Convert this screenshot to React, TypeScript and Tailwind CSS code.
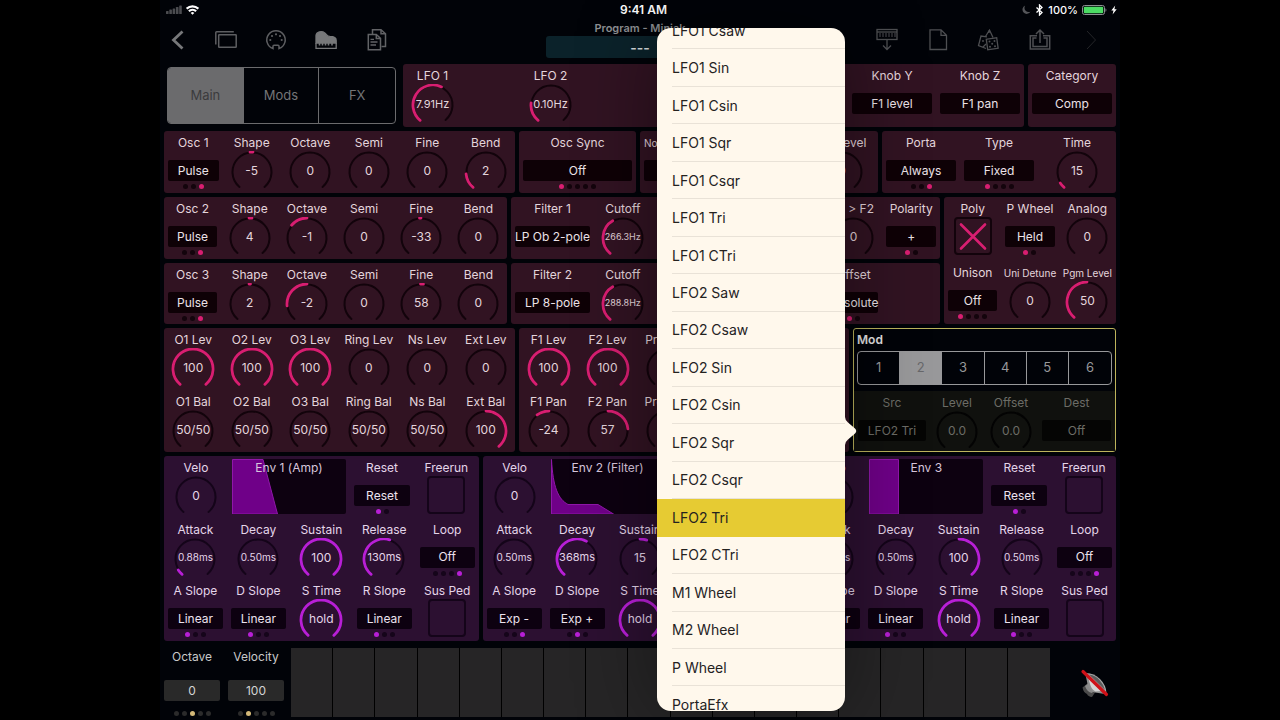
import { useState } from 'react';
import type { ReactNode } from 'react';

type Tone = 'pink' | 'purple' | 'dim' | 'keys';

const ARC: Record<Tone, string> = {
  pink: 'stroke-[#d81e71]',
  purple: 'stroke-[#b81fd6]',
  dim: 'stroke-[#6b6b3a]',
  keys: 'stroke-[#c9b27c]',
};

const TRACK: Record<Tone, string> = {
  pink: 'stroke-[#12030b]',
  purple: 'stroke-[#140419]',
  dim: 'stroke-[#030303]',
  keys: 'stroke-black',
};

const BUTTON: Record<Tone, string> = {
  pink: 'bg-[#0e0106] text-[#ece2e7]',
  purple: 'bg-[#0d0110] text-[#ece2ee]',
  dim: 'bg-[#050504] text-[#6c6c66]',
  keys: 'bg-[#292929] text-[#d4d4d4]',
};

const TEXT: Record<Tone, string> = {
  pink: 'text-[#e4d5dc]',
  purple: 'text-[#e4d5e9]',
  dim: 'text-[#6c6c66]',
  keys: 'text-[#c4c4c4]',
};

const DOT_ON: Record<Tone, string> = {
  pink: 'bg-[#d81e71]',
  purple: 'bg-[#b81fd6]',
  dim: 'bg-transparent',
  keys: 'bg-[#d3b878]',
};

const DOT_OFF: Record<Tone, string> = {
  pink: 'bg-[#13040c]',
  purple: 'bg-[#15051a]',
  dim: 'bg-transparent',
  keys: 'bg-[#2b2b2b]',
};

const VALUE_SIZE = {
  xs: 'text-[9px]',
  sm: 'text-[10px]',
  md: 'text-[11px]',
  lg: 'text-xs',
};

// The dial sweeps 280 degrees, with the gap at the bottom
function arcPath(from: number, to: number, r: number) {
  const point = (v: number) => {
    const a = ((v * 280 - 140) * Math.PI) / 180;
    return `${(22 + r * Math.sin(a)).toFixed(2)} ${(21 - r * Math.cos(a)).toFixed(2)}`;
  };
  const large = (to - from) * 280 > 180 ? 1 : 0;
  return `M${point(from)}A${r} ${r} 0 ${large} 1 ${point(to)}`;
}

type KnobProps = {
  label: string;
  value: string;
  tone?: Tone;
  from?: number;
  to?: number;
  smallLabel?: boolean;
  size?: keyof typeof VALUE_SIZE;
};

function Knob({ label, value, tone = 'pink', from = 0, to = 0, smallLabel, size = 'lg' }: KnobProps) {
  return (
    <label className={`flex flex-col items-center pt-1 ${TEXT[tone]}`}>
      <span className={`h-4 leading-4 whitespace-nowrap ${smallLabel ? 'text-[10px]' : 'text-xs'}`}>{label}</span>
      <span className="relative flex h-10 w-11 items-center justify-center">
        <svg viewBox="0 0 44 40" className="absolute inset-0 h-10 w-11" fill="none" strokeLinecap="round">
          <path d={arcPath(0, 1, 19.5)} className={TRACK[tone]} strokeWidth="2" />
          {to > from && <path d={arcPath(from, to, 20)} className={ARC[tone]} strokeWidth="2.8" />}
        </svg>
        <span className={`relative whitespace-nowrap ${VALUE_SIZE[size]}`}>{value}</span>
        <input type="range" min={0} max={100} defaultValue={to * 100} className="absolute inset-0 h-10 w-11 opacity-0" />
      </span>
    </label>
  );
}

type PickerProps = {
  label: string;
  value: string;
  tone?: Tone;
  dots?: number;
  active?: number;
  smallLabel?: boolean;
};

function Picker({ label, value, tone = 'pink', dots = 0, active = 0, smallLabel }: PickerProps) {
  return (
    <div className={`flex flex-col px-1 pt-1 ${TEXT[tone]}`}>
      <span className={`h-4 text-center leading-4 whitespace-nowrap ${smallLabel ? 'text-[10px]' : 'text-xs'}`}>{label}</span>
      <button
        type="button"
        aria-label={label}
        className={`mt-[9px] flex h-[21px] items-center justify-center rounded-xs text-xs whitespace-nowrap ${BUTTON[tone]}`}
      >
        {value}
      </button>
      <Dots count={dots} active={active} tone={tone} />
    </div>
  );
}

function Dots({ count, active, tone }: { count: number; active: number; tone: Tone }) {
  return (
    <div className="mt-[3px] flex h-[5px] justify-center gap-[3px]">
      {Array.from({ length: count }, (_, i) => (
        <span key={i} className={`size-[5px] rounded-full ${i === active ? DOT_ON[tone] : DOT_OFF[tone]}`} />
      ))}
    </div>
  );
}

function Toggle({ label, tone = 'pink', checked = false }: { label: string; tone?: Tone; checked?: boolean }) {
  const [on, setOn] = useState(checked);
  return (
    <label className={`flex flex-col items-center pt-1 ${TEXT[tone]}`}>
      <span className="h-4 text-xs leading-4 whitespace-nowrap">{label}</span>
      <span className="relative size-[38px]">
        <input
          type="checkbox"
          checked={on}
          onChange={() => setOn(!on)}
          className={`block size-[38px] appearance-none rounded-sm border-2 ${tone === 'purple' ? 'border-[#140419]' : 'border-[#12030b]'}`}
        />
        {on && (
          <svg viewBox="0 0 38 38" className="pointer-events-none absolute inset-0 size-[38px]">
            <path d="M7 7.500 31 31.500M31 7.500 7 31.500" className={ARC[tone]} strokeWidth="2.6" strokeLinecap="round" />
          </svg>
        )}
      </span>
    </label>
  );
}

function Panel({ className = '', children }: { className?: string; children: ReactNode }) {
  return <section className={`rounded-[3px] ${className}`}>{children}</section>;
}

const PINK = 'bg-[#311322]';
const PURPLE = 'bg-[#2c1031]';

const SIX = 'grid grid-cols-6';

function StatusBar() {
  return (
    <div className="flex h-5 items-center text-white">
      <div className="flex flex-1 items-center gap-1 pl-[6px]">
        <svg width="16" height="10" viewBox="0 0 16 10" fill="#4b4c50">
          <rect x="0" y="6" width="2.600" height="3" rx=".6" />
          <rect x="3.300" y="4.500" width="2.600" height="4.500" rx=".6" />
          <rect x="6.600" y="3.500" width="2.600" height="5.500" rx=".6" />
          <rect x="9.900" y="2" width="2.600" height="7" rx=".6" />
          <rect x="13.200" y="0.500" width="2.600" height="8.500" rx=".6" />
        </svg>
        <svg width="13" height="10" viewBox="0 0 13 10" fill="none" stroke="white" strokeWidth="2.200">
          <path d="M.6 3.700a8.400 8.400 0 0 1 11.800 0" />
          <path d="M2.900 6.300a5.100 5.100 0 0 1 7.200 0" />
          <path d="M6.500 9.700 4.700 7.900a2.500 2.500 0 0 1 3.600 0z" fill="white" stroke="none" />
        </svg>
      </div>
      <span className="pl-1 text-xs font-semibold">9:41 AM</span>
      <div className="flex flex-1 items-center justify-end gap-1 pr-[3px]">
        <svg width="9" height="10" viewBox="0 0 9 10" fill="#55565a">
          <path d="M3.200.6a4.300 4.300 0 1 0 5.400 6A4.200 4.200 0 0 1 3.200.6z" />
        </svg>
        <svg width="9" height="12" viewBox="0 0 9 12" fill="none" stroke="white" strokeWidth="1.300">
          <path d="M1.500 3.500 7 8.500 4.500 11V1L7 3.500l-5.500 5" />
        </svg>
        <span className="text-[11px] font-medium">100%</span>
        <svg width="25" height="10" viewBox="0 0 25 10">
          <rect x=".5" y=".5" width="22" height="9" rx="2" fill="none" stroke="#8d8f92" />
          <rect x="1.800" y="1.800" width="19.400" height="6.400" rx="1" fill="#4cdc64" />
          <path d="M23.500 3.200c1.200.4 1.200 3.200 0 3.600z" fill="#8d8f92" />
        </svg>
        <svg width="6" height="10" viewBox="0 0 6 10" fill="white">
          <path d="M4.200.5.3 5.500h2.200L1.600 9.500 5.700 4.300H3.400z" />
        </svg>
      </div>
    </div>
  );
}

function IconButton({ label, className, children }: { label: string; className: string; children: ReactNode }) {
  return (
    <button type="button" aria-label={label} className={`flex h-[39px] items-center justify-center ${className}`}>
      <svg width="26" height="26" viewBox="0 0 26 26" fill="none" stroke="currentColor" strokeWidth="1.300">
        {children}
      </svg>
    </button>
  );
}

function Toolbar() {
  return (
    <div className="flex h-11 justify-between">
      <div className="flex text-[#77787a]">
        <IconButton label="Back" className="mr-[5px] w-9">
          <path d="M17.500 4.500 8.500 13l9 8.500" strokeWidth="2.800" />
        </IconButton>
        <IconButton label="Windows" className="w-[50px] text-[#5d5e61]">
          <path d="M2.800 17.500V5.500q0-.8.800-.8h17.200" strokeWidth="1.500" />
          <rect x="5.700" y="7.700" width="17.500" height="12.600" rx=".6" strokeWidth="1.500" />
        </IconButton>
        <IconButton label="MIDI" className="w-[50px] text-[#5d5e61]">
          <path d="M10 21.600a9.200 9.200 0 1 1 6 0v-2.400q0-1-1-1h-4q-1 0-1 1z" strokeWidth="1.500" />
          <g fill="currentColor" stroke="none">
            <circle cx="7.300" cy="13" r="1.100" />
            <circle cx="9" cy="9" r="1.100" />
            <circle cx="13" cy="7.300" r="1.100" />
            <circle cx="17" cy="9" r="1.100" />
            <circle cx="18.700" cy="13" r="1.100" />
          </g>
        </IconButton>
        <IconButton label="Piano" className="w-[50px]">
          <path d="M3 16V8.500c.4-3.500 5.500-5.200 8.800-2.600 2.300 2 2.200 3.300 5 3.500 3.600 0 6.400.4 6.400 4V16z" fill="currentColor" />
          <path d="M3 16v5.300h20.200V16" />
          <path d="M6.500 16v2.500M9.500 16v2.500M12.500 16v2.500M15.500 16v2.500M19 16v2.500" strokeWidth="1.600" />
        </IconButton>
        <IconButton label="Copy" className="w-[50px] text-[#626366]">
          <path d="M9.500 7V2.800H18l4.500 4v12.700h-4M18 2.800v4h4.500" strokeWidth="1.500" />
          <path d="M5.300 7.500h8l4.200 3.800v11.400H5.300zM13.300 7.500v4h4.200" strokeWidth="1.500" />
          <path d="M7.500 12.300h3.500M7.500 15h7M7.500 18h5.500" />
        </IconButton>
      </div>
      <div className="absolute inset-x-0 flex flex-col items-center">
        <label htmlFor="program" className="h-4 text-[11px] leading-4 font-semibold text-[#8d8f92]">
          Program - Miniak
        </label>
        <input
          id="program"
          readOnly
          value="---"
          className="h-[22px] w-[188px] rounded-[3px] bg-[#0b222a] text-center text-sm font-semibold text-[#d5dcde]"
        />
      </div>
      <div className="relative flex pr-1 text-[#4e4f52]">
        <IconButton label="Keyboard down" className="w-[51px]">
          <rect x="3" y="2.500" width="20" height="10" />
          <path d="M3 5h20" />
          <path d="M6 6v4M9 6v4M12 6v4M15 6v4M18 6v4M21 6v4" strokeWidth="1" />
          <path d="M13 12.500v10M9 18.500l4 4 4-4" />
        </IconButton>
        <IconButton label="New" className="w-[51px]">
          <path d="M5 2.800h11l5.500 5.500v14.200H5zM16 2.800v5.500h5.500" />
        </IconButton>
        <IconButton label="Randomize" className="w-[51px]">
          <rect x="11" y="11.500" width="10.500" height="10.500" transform="rotate(-8 16 17)" />
          <path d="M11 9.800 5 9 2.500 18.500l7.500 3M9.500 9.500 13.500 3l3.500 7.500M7 20l3-3M13 3v3" />
          <g fill="currentColor" stroke="none">
            <circle cx="13.500" cy="14.500" r="1" />
            <circle cx="18.500" cy="14" r="1" />
            <circle cx="16.200" cy="16.800" r="1" />
            <circle cx="14" cy="19.800" r="1" />
            <circle cx="19" cy="19.200" r="1" />
            <circle cx="7" cy="14" r=".9" />
          </g>
        </IconButton>
        <IconButton label="Share" className="w-[51px]">
          <path d="M10 8.800H3.300V22h19.400V8.800H16" strokeWidth="1.500" />
          <path d="M9.500 11H6v8.500h14V11h-3.500M13 16V3M9 7l4-4 4 4" strokeWidth="1.500" />
        </IconButton>
        <IconButton label="Next" className="w-[51px] text-[#242528]">
          <path d="m9 4 8.500 9L9 22" strokeWidth="1" />
        </IconButton>
      </div>
    </div>
  );
}

function PageTabs() {
  const [tab, setTab] = useState('Main');
  return (
    <div className="m-[3px] grid w-[229px] grid-cols-3 divide-x divide-[#6b6b6d] overflow-hidden rounded-sm border border-[#6b6b6d] text-[13px] text-[#747577]">
      {['Main', 'Mods', 'FX'].map((name) => (
        <button
          key={name}
          type="button"
          onClick={() => setTab(name)}
          className={name === tab ? 'bg-[#6b6b6d] text-[#3b3b3d]' : ''}
        >
          {name}
        </button>
      ))}
    </div>
  );
}

function Oscillator({ index, knobs }: { index: number; knobs: KnobProps[] }) {
  return (
    <Panel className={`${PINK} ${SIX} flex-none`}>
      <Picker label={`Osc ${index}`} value="Pulse" dots={3} active={2} />
      {knobs.map((knob) => (
        <Knob key={knob.label} {...knob} />
      ))}
    </Panel>
  );
}

function Mod() {
  const [slot, setSlot] = useState(2);
  return (
    <Panel className="flex flex-col border border-[#bdb45c] bg-[#010308]">
      <h2 className="h-[22px] pl-[3px] text-xs leading-[22px] font-semibold text-[#e4e4e4]">Mod</h2>
      <div className="mx-[3px] grid h-[34px] grid-cols-6 divide-x divide-[#98989a] overflow-hidden rounded-sm border border-[#98989a] text-[13px] text-[#98989a]">
        {[1, 2, 3, 4, 5, 6].map((n) => (
          <button
            key={n}
            type="button"
            onClick={() => setSlot(n)}
            className={n === slot ? 'bg-[#98989a] text-[#67676a]' : ''}
          >
            {n}
          </button>
        ))}
      </div>
      <div className="mt-[6px] grid flex-1 grid-cols-[76px_54px_54px_1fr] bg-[#10110e]">
        <Picker label="Src" value="LFO2 Tri" tone="dim" />
        <Knob label="Level" value="0.0" tone="dim" />
        <Knob label="Offset" value="0.0" tone="dim" />
        <Picker label="Dest" value="Off" tone="dim" />
      </div>
    </Panel>
  );
}

type EnvelopeProps = {
  title: string;
  shape: string;
  attack: KnobProps;
  decay: KnobProps;
  sustain: KnobProps;
  release: KnobProps;
  aSlope: [string, number];
  dSlope: [string, number];
};

function Envelope({ title, shape, attack, decay, sustain, release, aSlope, dSlope }: EnvelopeProps) {
  return (
    <Panel className={`${PURPLE} grid grid-rows-3`}>
      <div className="grid grid-cols-[64px_122px_64px_1fr]">
        <Knob label="Velo" value="0" tone="purple" />
        <div className="relative mx-1 mt-[3px] h-[55px] rounded-xs bg-[#0d0110]">
          <svg viewBox="0 0 114 55" preserveAspectRatio="none" className="absolute inset-0 h-full w-full">
            <path d={shape} fill="#6f0088" stroke="#8f17a8" />
          </svg>
          <h2 className="relative pt-[1px] text-center text-xs leading-4 text-[#d8c6dd]">{title}</h2>
        </div>
        <Picker label="Reset" value="Reset" tone="purple" dots={2} active={0} />
        <Toggle label="Freerun" tone="purple" />
      </div>
      <div className="grid grid-cols-5">
        <Knob {...attack} tone="purple" />
        <Knob {...decay} tone="purple" />
        <Knob {...sustain} tone="purple" />
        <Knob {...release} tone="purple" />
        <Picker label="Loop" value="Off" tone="purple" dots={4} active={3} />
      </div>
      <div className="grid grid-cols-5">
        <Picker label="A Slope" value={aSlope[0]} tone="purple" dots={3} active={aSlope[1]} />
        <Picker label="D Slope" value={dSlope[0]} tone="purple" dots={3} active={dSlope[1]} />
        <Knob label="S Time" value="hold" tone="purple" to={1} />
        <Picker label="R Slope" value="Linear" tone="purple" dots={3} active={0} />
        <Toggle label="Sus Ped" tone="purple" />
      </div>
    </Panel>
  );
}

function Keyboard() {
  return (
    <div className="flex h-[79px] px-1 pt-1">
      <div className="w-[56px]">
        <KeyPicker label="Octave" value="0" active={2} />
      </div>
      <div className="mr-[7px] ml-2 w-[56px]">
        <KeyPicker label="Velocity" value="100" active={1} />
      </div>
      <div className="mt-[3px] mb-[3px] grid flex-1 grid-cols-18 divide-x divide-black bg-[#262526]">
        {Array.from({ length: 18 }, (_, i) => (
          <button key={i} type="button" aria-label={`Key ${i + 1}`} />
        ))}
      </div>
      <button type="button" aria-label="Mute" className="flex w-[66px] items-center justify-end pr-[6px]">
        <svg width="32" height="32" viewBox="0 0 32 32">
          <path d="M4.500 20.500 10 16l8 8-4 6q-4-.5-5-3-3.500-1.500-4.500-6.500z" fill="#4a4a4a" />
          <path d="m7 19 4-3 6 6-3 4q-5-1-7-7z" fill="#8a8a8a" />
          <path d="M9.500 17 7.500 7.500 27 27l-10-1.500q-6-2-7.500-8.500z" fill="#8f8f8f" />
          <path d="m12 17-2-7 13.500 14-6 .5q-4-2-5.500-7.500z" fill="#d6d6d6" />
          <path d="M8 6q8 0 14 6t6.500 14z" fill="#a9a9a9" />
          <path d="M11 7.500q6 .5 10.500 5.500t5.500 10z" fill="#5d5d5d" />
          <path d="M5 4.500 28.500 27.500" stroke="#cf1118" strokeWidth="3.200" strokeLinecap="round" />
        </svg>
      </button>
    </div>
  );
}

function KeyPicker({ label, value, active }: { label: string; value: string; active: number }) {
  return (
    <div className="flex flex-col pt-1 text-xs text-[#c8c8c8]">
      <span className="h-4 text-center leading-4">{label}</span>
      <button type="button" aria-label={label} className="mt-[15px] h-[21px] rounded-xs bg-[#292929] text-[#d4d4d4]">
        {value}
      </button>
      <div className="mt-[7px]">
        <Dots count={5} active={active} tone="keys" />
      </div>
    </div>
  );
}

const SOURCES = [
  'LFO1 Csaw', 'LFO1 Sin', 'LFO1 Csin', 'LFO1 Sqr', 'LFO1 Csqr', 'LFO1 Tri', 'LFO1 CTri',
  'LFO2 Saw', 'LFO2 Csaw', 'LFO2 Sin', 'LFO2 Csin', 'LFO2 Sqr', 'LFO2 Csqr', 'LFO2 Tri', 'LFO2 CTri',
  'M1 Wheel', 'M2 Wheel', 'P Wheel', 'PortaEfx',
];

function SourceMenu() {
  const [source, setSource] = useState('LFO2 Tri');
  return (
    <div className="absolute top-7 left-[497px] w-[188px]">
      <div className="h-[683px] overflow-hidden rounded-[14px] bg-[#fff8ec] shadow-[0_0_80px_rgba(0,0,0,0.4)]">
        <ul className="-mt-4 flex h-[712px] flex-col text-sm text-[#24221f]">
          {SOURCES.map((name) => (
            <li key={name} className={`flex flex-1 pl-[15px] ${name === source ? 'bg-[#e6cb33]' : ''}`}>
              <button
                type="button"
                onClick={() => setSource(name)}
                className={`flex-1 border-b pt-px text-left ${name === source ? 'border-[#e6cb33]' : 'border-[#e9e2d7]'}`}
              >
                {name}
              </button>
            </li>
          ))}
        </ul>
      </div>
      <svg width="12" height="32" viewBox="0 0 12 32" className="absolute top-[387px] left-full" fill="#fff8ec">
        <path d="M0 2q0 3 3 5.500l7 6q2.500 2.500 0 5l-7 6Q0 27 0 30z" />
      </svg>
    </div>
  );
}

export default function App() {
  return (
    <div className="min-h-screen bg-black font-['Inter','Liberation_Sans',sans-serif]">
      <main className="relative mx-auto max-w-[960px] overflow-hidden bg-[#010308]">
        <StatusBar />
        <Toolbar />

        <div className="flex flex-col gap-1 px-1">
          <div className="flex h-[63px]">
            <PageTabs />
            <Panel className={`${PINK} mr-1 ml-1 grid flex-1 grid-cols-[59px_59px_59px_1fr_88px_88px_88px]`}>
              <Knob label="LFO 1" value="7.91Hz" to={0.59} size="md" />
              <span />
              <Knob label="LFO 2" value="0.10Hz" to={0.2} size="md" />
              <span />
              <Picker label="Knob X" value="Cutoff" />
              <Picker label="Knob Y" value="F1 level" />
              <Picker label="Knob Z" value="F1 pan" />
            </Panel>
            <Panel className={`${PINK} w-[88px]`}>
              <Picker label="Category" value="Comp" />
            </Panel>
          </div>

          <div className="grid h-[62px] grid-cols-[351fr_117fr_238fr_234fr] gap-1">
            <Oscillator
              index={1}
              knobs={[
                { label: 'Shape', value: '-5', from: 0.48, to: 0.51 },
                { label: 'Octave', value: '0' },
                { label: 'Semi', value: '0' },
                { label: 'Fine', value: '0' },
                { label: 'Bend', value: '2', to: 0.16 },
              ]}
            />
            <Panel className={PINK}>
              <Picker label="Osc Sync" value="Off" dots={5} active={0} />
            </Panel>
            <Panel className={`${PINK} grid grid-cols-[58px_1fr_1fr_72px]`}>
              <Picker label="Noise Type" value="Pink" smallLabel dots={2} />
              <Knob label="Ring" value="0" />
              <Knob label="Noise" value="0" />
              <Knob label="Ns Level" value="0" />
            </Panel>
            <Panel className={`${PINK} grid grid-cols-3`}>
              <Picker label="Porta" value="Always" dots={3} active={2} />
              <Picker label="Type" value="Fixed" dots={4} active={0} />
              <Knob label="Time" value="15" to={0.06} />
            </Panel>
          </div>

          <div className="flex h-[127px] gap-1">
            <div className="grid flex-1 grid-cols-[343fr_429fr] grid-rows-[62px_61px] gap-1">
              <Oscillator
                index={2}
                knobs={[
                  { label: 'Shape', value: '4', from: 0.49, to: 0.52 },
                  { label: 'Octave', value: '-1', from: 0.32, to: 0.5 },
                  { label: 'Semi', value: '0' },
                  { label: 'Fine', value: '-33', from: 0.485, to: 0.5 },
                  { label: 'Bend', value: '0' },
                ]}
              />
              <Panel className={`${PINK} grid grid-cols-[83px_repeat(6,1fr)]`}>
                <Picker label="Filter 1" value="LP Ob 2-pole" />
                <Knob label="Cutoff" value="266.3Hz" to={0.39} size="xs" />
                <Knob label="Res" value="0" />
                <Knob label="Env" value="0" />
                <Knob label="Keytrk" value="0" />
                <Knob label="F1 > F2" value="0" />
                <Picker label="Polarity" value="+" dots={2} active={0} />
              </Panel>
              <Oscillator
                index={3}
                knobs={[
                  { label: 'Shape', value: '2', from: 0.49, to: 0.505 },
                  { label: 'Octave', value: '-2', from: 0.16, to: 0.5 },
                  { label: 'Semi', value: '0' },
                  { label: 'Fine', value: '58', from: 0.495, to: 0.525 },
                  { label: 'Bend', value: '0' },
                ]}
              />
              <Panel className={`${PINK} grid grid-cols-[83px_repeat(6,1fr)]`}>
                <Picker label="Filter 2" value="LP 8-pole" />
                <Knob label="Cutoff" value="288.8Hz" to={0.39} size="xs" />
                <Knob label="Res" value="0" />
                <Knob label="Env" value="0" />
                <Knob label="Keytrk" value="0" />
                <Picker label="Offset" value="Absolute" dots={2} active={0} />
              </Panel>
            </div>
            <Panel className={`${PINK} grid w-[172px] grid-cols-3 grid-rows-[64px_63px]`}>
              <Toggle label="Poly" checked />
              <Picker label="P Wheel" value="Held" dots={2} active={0} />
              <Knob label="Analog" value="0" />
              <Picker label="Unison" value="Off" dots={4} active={0} />
              <Knob label="Uni Detune" value="0" smallLabel />
              <Knob label="Pgm Level" value="50" to={0.5} smallLabel />
            </Panel>
          </div>

          <div className="grid h-[124px] grid-cols-[351fr_330fr_263fr] gap-1">
            <Panel className={`${PINK} ${SIX} grid-rows-2`}>
              <Knob label="O1 Lev" value="100" to={1} />
              <Knob label="O2 Lev" value="100" to={1} />
              <Knob label="O3 Lev" value="100" to={1} />
              <Knob label="Ring Lev" value="0" />
              <Knob label="Ns Lev" value="0" />
              <Knob label="Ext Lev" value="0" />
              <Knob label="O1 Bal" value="50/50" />
              <Knob label="O2 Bal" value="50/50" />
              <Knob label="O3 Bal" value="50/50" />
              <Knob label="Ring Bal" value="50/50" />
              <Knob label="Ns Bal" value="50/50" />
              <Knob label="Ext Bal" value="100" from={0.5} to={1} />
            </Panel>
            <Panel className={`${PINK} grid grid-cols-[59px_59px_59px_1fr] grid-rows-2`}>
              <Knob label="F1 Lev" value="100" to={1} />
              <Knob label="F2 Lev" value="100" to={1} />
              <Knob label="Pre Lev" value="0" />
              <span />
              <Knob label="F1 Pan" value="-24" from={0.37} to={0.5} />
              <Knob label="F2 Pan" value="57" from={0.5} to={0.8} />
              <Knob label="Pre Pan" value="0" />
            </Panel>
            <Mod />
          </div>

          <div className="grid h-[185px] grid-cols-3 gap-1">
            <Envelope
              title="Env 1 (Amp)"
              shape="M.5 55V.5H31L45.500 55z"
              attack={{ label: 'Attack', value: '0.88ms', to: 0.06, size: 'sm' }}
              decay={{ label: 'Decay', value: '0.50ms', size: 'sm' }}
              sustain={{ label: 'Sustain', value: '100', to: 1 }}
              release={{ label: 'Release', value: '130ms', to: 0.56, size: 'md' }}
              aSlope={['Linear', 0]}
              dSlope={['Linear', 0]}
            />
            <Envelope
              title="Env 2 (Filter)"
              shape="M.5 55V.5C2 28 7 40 17 45.500H47L62.500 55z"
              attack={{ label: 'Attack', value: '0.50ms', size: 'sm' }}
              decay={{ label: 'Decay', value: '368ms', to: 0.6, size: 'md' }}
              sustain={{ label: 'Sustain', value: '15', from: 0.5, to: 0.57 }}
              release={{ label: 'Release', value: '130ms', to: 0.56, size: 'md' }}
              aSlope={['Exp -', 2]}
              dSlope={['Exp +', 1]}
            />
            <Envelope
              title="Env 3"
              shape="M.5 55V.5H29.500V55z"
              attack={{ label: 'Attack', value: '0.50ms', size: 'sm' }}
              decay={{ label: 'Decay', value: '0.50ms', size: 'sm' }}
              sustain={{ label: 'Sustain', value: '100', from: 0.5, to: 1 }}
              release={{ label: 'Release', value: '0.50ms', size: 'sm' }}
              aSlope={['Linear', 0]}
              dSlope={['Linear', 0]}
            />
          </div>
        </div>

        <Keyboard />
        <SourceMenu />
      </main>
    </div>
  );
}
